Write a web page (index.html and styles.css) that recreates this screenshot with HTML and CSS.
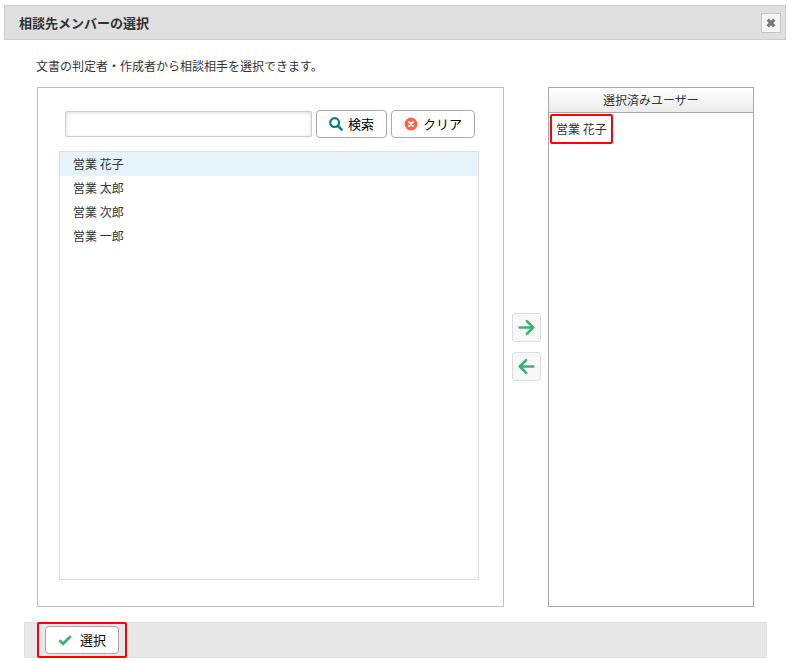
FILE: index.html
```html
<!DOCTYPE html>
<html lang="ja">
<head>
<meta charset="utf-8">
<meta name="viewport" content="width=device-width, initial-scale=1">
<title>相談先メンバーの選択</title>
<link rel="stylesheet" href="styles.css">
</head>
<body>
<div class="dialog">
  <header class="dialog-header">
    <h1 class="dialog-title">相談先メンバーの選択</h1>
    <button class="close-button" type="button" aria-label="閉じる">
      <svg width="10" height="10" viewBox="0 0 10 10" aria-hidden="true"><path d="M1.7 1.7 8.3 8.3M8.3 1.7 1.7 8.3" stroke="#777" stroke-width="3.2"/></svg>
    </button>
  </header>

  <main class="dialog-body">
    <p class="lead">文書の判定者・作成者から相談相手を選択できます。</p>
    <div class="picker">
      <section class="candidates">
        <form class="search">
          <input class="search-input" type="text" aria-label="検索">
          <button class="button" type="button">
            <svg class="icon" width="14" height="14" viewBox="0 0 14 14" fill="none" stroke="#008080" aria-hidden="true"><circle cx="5.6" cy="5.6" r="4.4" stroke-width="2.2"/><path d="M8.9 8.9 12.6 12.6" stroke-width="2.6" stroke-linecap="round"/></svg>
            検索
          </button>
          <button class="button" type="button">
            <svg class="icon" width="14" height="14" viewBox="0 0 14 14" aria-hidden="true"><circle cx="7" cy="7" r="6.5" fill="#ff6347"/><path d="M5 5 9 9M9 5 5 9" stroke="#fff" stroke-width="2" stroke-linecap="round"/></svg>
            クリア
          </button>
        </form>
        <ul class="user-list" role="listbox" aria-label="ユーザー">
          <li class="user user-active" role="option" aria-selected="true">営業 花子</li>
          <li class="user" role="option" aria-selected="false">営業 太郎</li>
          <li class="user" role="option" aria-selected="false">営業 次郎</li>
          <li class="user" role="option" aria-selected="false">営業 一郎</li>
        </ul>
      </section>

      <div class="transfer">
        <button class="arrow-button" type="button" aria-label="追加">
          <svg width="17" height="17" viewBox="0 0 17 17" fill="none" stroke="#3cb371" stroke-width="2.6" stroke-linecap="round" stroke-linejoin="round" aria-hidden="true"><path d="M1.6 8.5H15M8.9 2.1 15.2 8.5 8.9 14.9"/></svg>
        </button>
        <button class="arrow-button" type="button" aria-label="削除">
          <svg width="17" height="17" viewBox="0 0 17 17" fill="none" stroke="#3cb371" stroke-width="2.6" stroke-linecap="round" stroke-linejoin="round" aria-hidden="true"><path d="M15.4 8.5H2M8.1 2.1 1.8 8.5 8.1 14.9"/></svg>
        </button>
      </div>

      <section class="selected">
        <h2 class="selected-title">選択済みユーザー</h2>
        <ul class="selected-list">
          <li class="selected-user">営業 花子</li>
        </ul>
      </section>
    </div>
  </main>

  <footer class="dialog-footer">
    <div class="highlight">
      <button class="button button-select" type="button">
        <svg class="icon" width="14" height="14" viewBox="0 0 14 14" fill="none" stroke="#3cb371" stroke-width="2.8" aria-hidden="true"><path d="M1.4 7.2 5.1 10.7 12.7 3.2"/></svg>
        選択
      </button>
    </div>
  </footer>
</div>
</body>
</html>
```
FILE: styles.css
```css
* {
  box-sizing: border-box;
}

body {
  margin: 0;
  background: #fff;
  color: #333;
  font: 12px/24px "Noto Sans CJK JP", "Liberation Sans", sans-serif;
}

h1,
h2,
p,
ul {
  margin: 0;
  padding: 0;
}

ul {
  list-style: none;
}

button,
input {
  font: inherit;
  margin: 0;
}

svg {
  display: block;
  flex: none;
}

.dialog {
  padding: 5px 9px 3px 4px;
}

.dialog-header {
  display: flex;
  align-items: center;
  justify-content: space-between;
  height: 35px;
  padding: 0 4px 0 14px;
  border: 1px solid #ccc;
  background: #dfdfdf;
}

.dialog-title {
  font-size: 13px;
  font-weight: bold;
}

.close-button {
  display: flex;
  align-items: center;
  justify-content: center;
  width: 20px;
  height: 20px;
  padding: 0;
  border: 1px solid #c5c5c5;
  background: #f6f6f6;
}

.dialog-body {
  padding: 14px 32px 15px;
}

.lead {
  padding-bottom: 9px;
}

.picker {
  display: grid;
  grid-template-columns: 467fr 44px 206fr;
  min-height: 520px;
  margin-left: 1px;
}

.candidates {
  display: flex;
  flex-direction: column;
  padding: 22px 24px 26px 21px;
  border: 1px solid #c1c1c1;
}

.search {
  display: flex;
  align-items: center;
  gap: 4px;
  padding: 0 4px 0 6px;
  margin-bottom: 13px;
}

.search-input {
  flex: 1;
  min-width: 0;
  height: 26px;
  padding: 0 4px;
  border: 1px solid #ccc;
  border-radius: 2px;
  background: #fff;
  box-shadow: inset 0 1px 4px #ddd;
}

.button {
  display: flex;
  align-items: center;
  gap: 5px;
  height: 28px;
  padding: 0 12px;
  border: 1px solid #aaa;
  border-radius: 4px;
  background: #fff;
  color: #000;
  font-size: 13px;
  white-space: nowrap;
}

.user-list {
  flex: 1;
  border: 1px solid #ddd;
}

.user {
  padding: 0 13px;
}

.user-active {
  background: #e6f3fa;
}

.transfer {
  display: flex;
  flex-direction: column;
  align-items: center;
  justify-content: center;
  gap: 10px;
}

.arrow-button {
  display: flex;
  align-items: center;
  justify-content: center;
  width: 29px;
  height: 29px;
  padding: 0;
  border: 1px solid #ddd;
  border-radius: 3px;
  background: #f8f8f8;
}

.selected {
  border: 1px solid #a8a8a8;
}

.selected-title {
  height: 25px;
  border-bottom: 1px solid #a8a8a8;
  background: linear-gradient(#fff, #ebebeb);
  font-size: 12px;
  font-weight: normal;
  text-align: center;
}

.selected-list {
  display: flex;
  flex-direction: column;
  align-items: flex-start;
  padding: 1px;
}

.selected-user {
  padding: 1px 4px;
  border: 2px solid #f00;
  border-radius: 2px;
}

.dialog-footer {
  display: flex;
  align-items: center;
  height: 36px;
  margin: 0 19px 0 20px;
  padding: 0 12px;
  border: 1px solid #ddd;
  background: #e8e8e8;
}

.highlight {
  padding: 2px 6px;
  border: 2px solid #f00;
  border-radius: 2px;
}

.button-select {
  gap: 8px;
}
```
